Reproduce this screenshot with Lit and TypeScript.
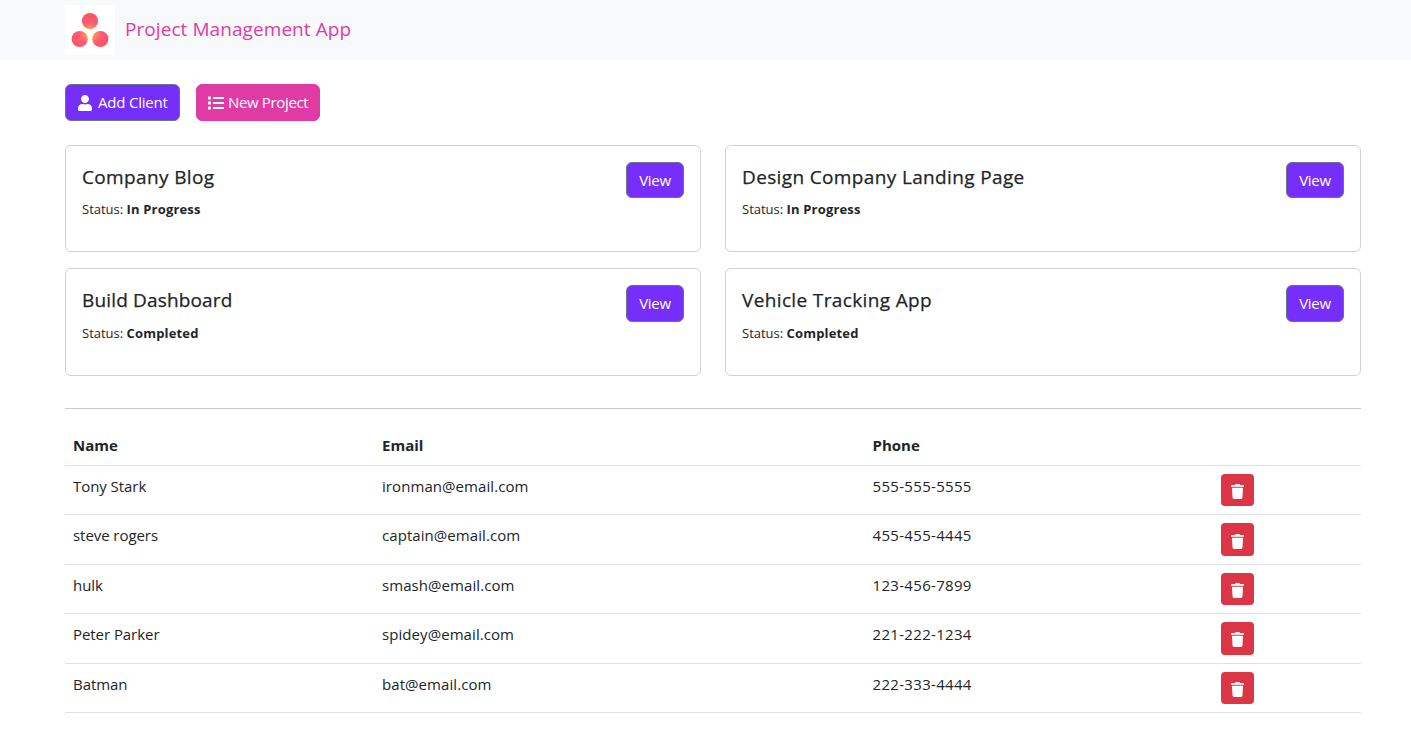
import { LitElement, html, css, svg } from "lit";
import { customElement } from "lit/decorators.js";

const projects = [
  { name: "Company Blog", status: "In Progress" },
  { name: "Design Company Landing Page", status: "In Progress" },
  { name: "Build Dashboard", status: "Completed" },
  { name: "Vehicle Tracking App", status: "Completed" },
];

const clients = [
  { name: "Tony Stark", email: "ironman@email.com", phone: "555-555-5555" },
  { name: "steve rogers", email: "captain@email.com", phone: "455-455-4445" },
  { name: "hulk", email: "smash@email.com", phone: "123-456-7899" },
  { name: "Peter Parker", email: "spidey@email.com", phone: "221-222-1234" },
  { name: "Batman", email: "bat@email.com", phone: "222-333-4444" },
];

const userPath = svg`<path d="M224 256c70.7 0 128-57.3 128-128S294.7 0 224 0 96 57.3 96 128s57.3 128 128 128zm89.6 32h-16.7c-22.2 10.2-46.9 16-72.9 16s-50.6-5.8-72.9-16h-16.7C60.2 288 0 348.2 0 422.4V464c0 26.5 21.5 48 48 48h352c26.5 0 48-21.5 48-48v-41.6c0-74.2-60.2-134.4-134.4-134.4z"/>`;
const listPath = svg`<path d="M80 368H16a16 16 0 0 0-16 16v64a16 16 0 0 0 16 16h64a16 16 0 0 0 16-16v-64a16 16 0 0 0-16-16zm0-320H16A16 16 0 0 0 0 64v64a16 16 0 0 0 16 16h64a16 16 0 0 0 16-16V64a16 16 0 0 0-16-16zm0 160H16a16 16 0 0 0-16 16v64a16 16 0 0 0 16 16h64a16 16 0 0 0 16-16v-64a16 16 0 0 0-16-16zm416 176H176a16 16 0 0 0-16 16v32a16 16 0 0 0 16 16h320a16 16 0 0 0 16-16v-32a16 16 0 0 0-16-16zm0-320H176a16 16 0 0 0-16 16v32a16 16 0 0 0 16 16h320a16 16 0 0 0 16-16V80a16 16 0 0 0-16-16zm0 160H176a16 16 0 0 0-16 16v32a16 16 0 0 0 16 16h320a16 16 0 0 0 16-16v-32a16 16 0 0 0-16-16z"/>`;
const trashPath = svg`<path d="M432 32H312l-9.4-18.7A24 24 0 0 0 281.1 0H166.8a23.72 23.72 0 0 0-21.4 13.3L136 32H16A16 16 0 0 0 0 48v32a16 16 0 0 0 16 16h416a16 16 0 0 0 16-16V48a16 16 0 0 0-16-16zM53.2 467a48 48 0 0 0 47.9 45h245.8a48 48 0 0 0 47.9-45L416 128H32z"/>`;

@customElement("app-root")
export class AppRoot extends LitElement {
  static styles = css`
    :host {
      display: block;
      height: 753px;
      overflow: hidden;
      background: #fff;
      color: #212529;
      font: 400 15px/24px "Open Sans", "Noto Sans", sans-serif;
    }
    * { box-sizing: border-box; }
    .nav {
      display: flex;
      align-items: center;
      height: 60px;
      padding-left: 65px;
      background: #f8f9fa;
    }
    .logo { display: block; width: 50px; height: 50px; margin-right: 10px; }
    .brand { font-size: 19px; line-height: 30px; letter-spacing: 0.07px; color: #e03ba5; white-space: nowrap; padding-bottom: 3px; }
    .content { width: 1296px; margin-left: 65px; padding-top: 24px; }
    .actions { display: flex; gap: 16px; height: 37px; }
    .btn {
      display: flex;
      align-items: center;
      justify-content: center;
      border-radius: 6px;
      border: 1px solid #6c757d;
      color: #fff;
      background: #762ffa;
      white-space: nowrap;
      font: inherit;
      padding: 0;
    }
    .btn svg { fill: #fff; display: block; }
    .btn span { padding-bottom: 2px; }
    .add, .new { justify-content: flex-start; }
    .add { width: 115px; gap: 6px; padding-left: 12px; letter-spacing: -0.2px; }
    .new { width: 124px; gap: 4px; padding-left: 11px; background: #e03ba5; border-color: #e03ba5; letter-spacing: -0.35px; }
    .cards { display: grid; grid-template-columns: 636px 636px; grid-template-rows: 107px 108px; gap: 16px 24px; margin-top: 24px; }
    .card {
      display: flex;
      justify-content: space-between;
      align-items: flex-start;
      border: 1px solid #d0d1d2;
      border-radius: 6px;
      padding: 16px;
    }
    .name {
      margin: 0 0 10px;
      padding-top: 3px;
      font-size: 19px;
      line-height: 24px;
      font-weight: 500;
      letter-spacing: 0.36px;
      -webkit-text-stroke: 0.25px #212529;
    }
    .card:nth-child(3) .name { letter-spacing: 0.16px; }
    .status { margin: 0; font-size: 13px; line-height: 21px; }
    .card:nth-child(n + 3) .status { padding-top: 1px; }
    .status b { letter-spacing: 0.16px; }
    .view { width: 58px; height: 36px; letter-spacing: -0.3px; }
    .view span { padding-bottom: 0; }
    .card:nth-child(n + 3) .view { height: 37px; }
    .card:nth-child(n + 3) .view span { padding-bottom: 2px; }
    .rule { height: 1px; background: #c8c9ca; margin: 32px 0 17px; }
    .table { display: flex; flex-direction: column; }
    .row {
      display: grid;
      grid-template-columns: 309px 490.5px 348.5px 148px;
      height: 49.4px;
      padding-top: 8px;
      border-bottom: 1px solid #dee2e6;
    }
    .head { height: 40px; padding-top: 7px; font-weight: 700; }
    .cell { padding-left: 8px; }
    .client { letter-spacing: -0.06px; }
    .email { letter-spacing: 0.07px; }
    .phone { letter-spacing: 0.32px; }
    .del { width: 33px; height: 32.4px; background: #dc3545; border: 0; border-radius: 4px; padding-top: 3px; }
  `;

  render() {
    return html`
      <header class="nav">
        <svg class="logo" viewBox="0 0 50 50">
          <defs>
            <radialGradient id="g" gradientUnits="userSpaceOnUse" cx="25" cy="28" r="20">
              <stop offset="0.15" stop-color="#ffa63c" />
              <stop offset="0.3" stop-color="#fd8a50" />
              <stop offset="0.56" stop-color="#fb5a80" />
              <stop offset="1" stop-color="#fb5753" />
            </radialGradient>
          </defs>
          <rect width="50" height="50" fill="#fff" />
          <g fill="url(#g)">
            <circle cx="25" cy="16" r="8.1" />
            <circle cx="14.7" cy="34" r="8.1" />
            <circle cx="35.3" cy="34" r="8.1" />
          </g>
        </svg>
        <span class="brand">Project Management App</span>
      </header>
      <main class="content">
        <div class="actions">
          <button class="btn add"><svg width="14" height="16" viewBox="0 0 448 512">${userPath}</svg><span>Add Client</span></button>
          <button class="btn new"><svg width="16" height="16" viewBox="0 0 512 512">${listPath}</svg><span>New Project</span></button>
        </div>
        <section class="cards">
          ${projects.map((p) => html`
            <article class="card">
              <div>
                <h5 class="name">${p.name}</h5>
                <p class="status">Status: <b>${p.status}</b></p>
              </div>
              <button class="btn view"><span>View</span></button>
            </article>`)}
        </section>
        <div class="rule"></div>
        <section class="table">
          <div class="row head">
            <div class="cell">Name</div><div class="cell">Email</div><div class="cell">Phone</div><div></div>
          </div>
          ${clients.map((c) => html`
            <div class="row">
              <div class="cell client">${c.name}</div>
              <div class="cell email">${c.email}</div>
              <div class="cell phone">${c.phone}</div>
              <div class="cell">
                <button class="btn del"><svg width="13" height="15" viewBox="0 0 448 512">${trashPath}</svg></button>
              </div>
            </div>`)}
        </section>
      </main>
    `;
  }
}
